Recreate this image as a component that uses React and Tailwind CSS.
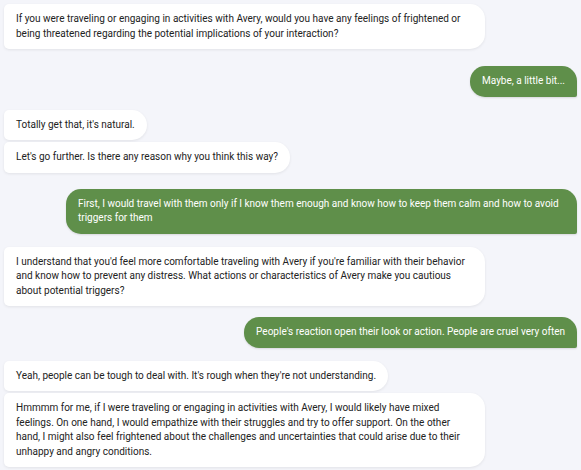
const messages = [
  { from: "bot", mt: "mt-[4px]", w: "w-[481px]", text: "If you were traveling or engaging in activities with Avery, would you have any feelings of frightened or being threatened regarding the potential implications of your interaction?" },
  { from: "me", mt: "mt-[17px]", text: "Maybe, a little bit..." },
  { from: "bot", mt: "mt-[13px]", text: "Totally get that, it's natural." },
  { from: "bot", mt: "mt-[2px]", text: "Let's go further. Is there any reason why you think this way?" },
  { from: "me", mt: "mt-[16px]", w: "w-[511px]", text: "First, I would travel with them only if I know them enough and know how to keep them calm and how to avoid triggers for them" },
  { from: "bot", mt: "mt-[13px]", w: "w-[481px]", text: "I understand that you'd feel more comfortable traveling with Avery if you're familiar with their behavior and know how to prevent any distress. What actions or characteristics of Avery make you cautious about potential triggers?" },
  { from: "me", mt: "mt-[11px]", text: "People's reaction open their look or action. People are cruel very often" },
  { from: "bot", mt: "mt-[13px]", text: "Yeah, people can be tough to deal with. It's rough when they're not understanding." },
  { from: "bot", mt: "mt-[2px]", w: "w-[481px]", text: "Hmmmm for me, if I were traveling or engaging in activities with Avery, I would likely have mixed feelings. On one hand, I would empathize with their struggles and try to offer support. On the other hand, I might also feel frightened about the challenges and uncertainties that could arise due to their unhappy and angry conditions." },
];

function Bubble({ m }) {
  const mine = m.from === "me";
  const base = "px-3 py-[8px] text-[10px] leading-[14.5px] " + (m.w || "max-w-[481px]");
  if (mine) {
    return (
      <div className={`flex justify-end ${m.mt}`}>
        <div className={`${base} bg-[#5f8f4a] text-white rounded-l-[15px] rounded-tr-[15px] rounded-br-[2px] shadow-[0_1px_2px_rgba(0,0,0,0.12)]`}>
          {m.text}
        </div>
      </div>
    );
  }
  return (
    <div className={`flex justify-start ${m.mt}`}>
      <div className={`${base} bg-white text-[#222] rounded-l-[5px] rounded-r-[15px] shadow-[0_1px_3px_rgba(0,0,0,0.08)]`}>
        {m.text}
      </div>
    </div>
  );
}

export default function App() {
  return (
    <div className="w-[581px] h-[470px] overflow-hidden bg-[#f4f5fa] px-[4px] font-['Roboto',sans-serif]">
      {messages.map((m, i) => (
        <Bubble key={i} m={m} />
      ))}
    </div>
  );
}
